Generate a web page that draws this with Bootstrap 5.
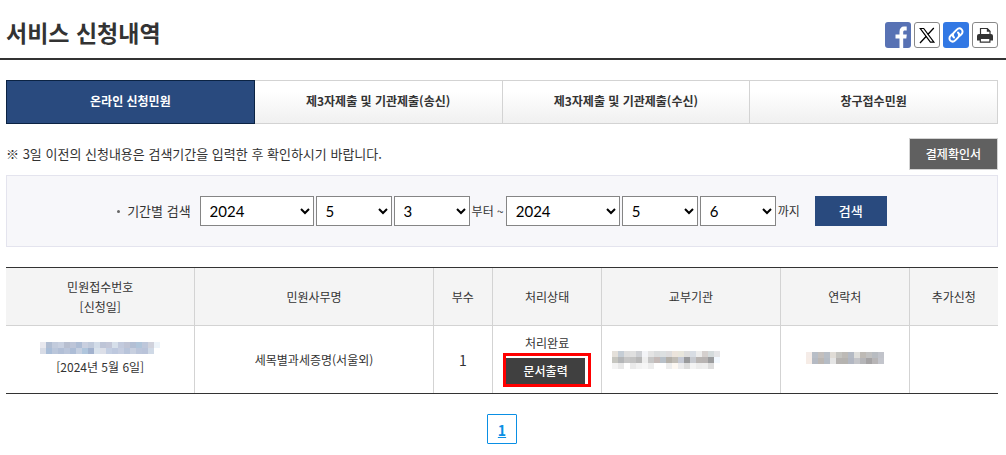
<!DOCTYPE html>
<html lang="ko">
<head>
<meta charset="utf-8">
<meta name="viewport" content="width=device-width, initial-scale=1">
<title>서비스 신청내역</title>
<link href="https://cdn.jsdelivr.net/npm/bootstrap@5.3.0/dist/css/bootstrap.min.css" rel="stylesheet">
<style>
body{font-family:"Noto Sans CJK KR",sans-serif;font-size:13px;line-height:20px;color:#333;background:#fff}
.page-head{border-bottom:2px solid #333;padding:17px 8px 11px 6px}
.page-head h1{font-size:23px;line-height:30px;font-weight:700}
.share{gap:3px;padding-top:5px;margin-bottom:-1px}
.share-btn{width:26px;height:26px;border:1px solid #888;border-radius:3px;background:#fff;padding:0;overflow:hidden;display:block}
.share-btn svg{display:block;width:100%;height:100%}
.share-fb{border:0;background:#5872b4}
.share-link{border:0;background:#3278e4}
.content{padding:20px 8px 0 6px}
.tab-row .nav-link{height:44px;border:1px solid #d3d3d3;border-left-width:0;border-radius:0;padding:9px 0;font-size:12px;line-height:22px;font-weight:700;color:#333;background:linear-gradient(#fff 25%,#f0f0f0)}
.tab-row .nav-link.active{background:#294a7e;border:1px solid #0b2343;color:#fff}
.receipt-btn{font-size:12px;line-height:20px;font-weight:500;color:#fff;background:#606060;border:1px solid #d3d3d3;border-radius:0;padding:5px 16px}
.notice{margin:14px 0 5px}
.search-box{background:#f7f7fa;border:1px solid #e4e4ee;padding:20px 0;gap:2px}
.search-box select{height:30px;border:1px solid #858585;border-radius:0;background:#fff;color:#000;font:15px Lato,sans-serif;padding:0 0 0 5px}
.sel-year{width:114px}
.sel-part{width:76px}
.unit{font-size:12px}
.dot{width:3px;height:3px;border-radius:50%;background:#666;margin-right:5px}
.search-box label{margin-right:7px}
.search-btn{width:72px;height:30px;padding:0;border:0;border-radius:0;background:#294a7e;color:#fff;font-size:13px;font-weight:500;margin-left:13px}
.result-table{table-layout:fixed;border-collapse:separate;border-spacing:0;margin:20px 0;color:#333;border-top:1px solid #333;border-bottom:1px solid #333;font-size:12px;line-height:20px;text-align:center}
.result-table>:not(caption)>*>*{border:0 solid #d3d3d3;border-left-width:1px;padding:8px 0;vertical-align:middle}
.result-table>:not(caption)>*>:first-child{border-left:0}
.result-table>thead>tr>th{background:#f4f4f4;font-weight:400;height:58px;border-bottom-width:1px}
.result-table tbody td{height:67px}
.mosaic{display:block;margin:0 auto 3px}
.result-table>tbody>tr>.agency{padding-left:10px}
.agency .mosaic{margin:0}
.copies{font-size:14px}
.print-mark{display:inline-block;border:3px solid #f00;padding:2px 3px 0 0;background:#fff;vertical-align:top}
.print-btn{display:block;width:79px;height:26px;padding:0;border:0;border-radius:0;background:#404040;color:#fff;font-size:12px;font-weight:500}
.page-now{width:30px;height:30px;border:1px solid #0a8fe4;border-radius:1px;padding:0;color:#0a8fe4;font-size:14px;line-height:30px;font-weight:700;text-decoration:underline;text-align:center}
</style>
</head>
<body>
<header class="page-head d-flex justify-content-between align-items-start">
  <h1 class="m-0">서비스 신청내역</h1>
  <div class="share d-flex">
    <button type="button" class="share-btn share-fb" aria-label="페이스북"><svg viewBox="0 0 26 26"><path fill="#fff" d="M14.500 26V16.500h-4v-4h4V10C14.500 6.500 16.300 4.600 19 4.600h2.700v3.900h-1.800c-1.300 0-1.700.600-1.700 1.800v2.200h3.600l-.5 4h-3.100V26z"/></svg></button>
    <button type="button" class="share-btn" aria-label="X"><svg viewBox="0 0 24 24"><path d="M5.300 5.500h3.400l10.200 13.600h-3.500z" fill="#fff" stroke="#000" stroke-width="1.200"/><path d="M18.800 5l-6 6.500M11.300 13.300L5 20" fill="none" stroke="#000" stroke-width="1.300"/></svg></button>
    <button type="button" class="share-btn share-link" aria-label="링크 복사"><svg viewBox="0 0 26 26" fill="none" stroke="#fff" stroke-width="2" stroke-linecap="round"><path d="M11 15.500c-1.600-1.600-1.500-3.500-.2-4.900l3-3c1.500-1.500 3.500-1.500 4.800-.2s1.300 3.400-.2 4.800l-1.700 1.700"/><path d="M15 10.500c1.600 1.600 1.500 3.500.2 4.900l-3 3c-1.500 1.500-3.500 1.500-4.800.2s-1.300-3.400.2-4.800l1.700-1.700"/></svg></button>
    <button type="button" class="share-btn" aria-label="인쇄"><svg viewBox="0 0 24 24"><path d="M7.500 11V5.500h6.800L17 8.200V11" fill="#fff" stroke="#333" stroke-width="1.200"/><path d="M13.800 5v3.700H17.500z" fill="#333"/><path d="M6 11h12q2 0 2 2v4.500H4V13q0-2 2-2z" fill="#333"/><path d="M7.300 15.500h9.600v3.600H7.300z" fill="#fff" stroke="#333" stroke-width="1.200"/></svg></button>
  </div>
</header>
<main class="content">
  <nav class="tab-row nav nav-justified">
    <a class="nav-link active" aria-current="page" href="#">온라인 신청민원</a>
    <a class="nav-link" href="#">제3자제출 및 기관제출(송신)</a>
    <a class="nav-link" href="#">제3자제출 및 기관제출(수신)</a>
    <a class="nav-link" href="#">창구접수민원</a>
  </nav>
  <div class="notice d-flex justify-content-between align-items-center">
    <span>※ 3일 이전의 신청내용은 검색기간을 입력한 후 확인하시기 바랍니다.</span>
    <button type="button" class="btn receipt-btn">결제확인서</button>
  </div>
  <form class="search-box d-flex justify-content-center align-items-center">
    <span class="dot"></span>
    <label for="y1">기간별 검색</label>
    <select id="y1" class="sel-year"><option>2024</option></select>
    <select class="sel-part" aria-label="시작 월"><option>5</option></select>
    <select class="sel-part" aria-label="시작 일"><option>3</option></select>
    <span class="unit">부터 ~</span>
    <select class="sel-year" aria-label="종료 연도"><option>2024</option></select>
    <select class="sel-part" aria-label="종료 월"><option>5</option></select>
    <select class="sel-part" aria-label="종료 일"><option>6</option></select>
    <span class="unit">까지</span>
    <button type="button" class="btn search-btn">검색</button>
  </form>
  <table class="table result-table">
    <colgroup><col style="width:19%"><col style="width:24%"><col style="width:6%"><col style="width:11%"><col style="width:18%"><col style="width:13%"><col style="width:9%"></colgroup>
    <thead><tr><th scope="col">민원접수번호<br>[신청일]</th><th scope="col">민원사무명</th><th scope="col">부수</th><th scope="col">처리상태</th><th scope="col">교부기관</th><th scope="col">연락처</th><th scope="col">추가신청</th></tr></thead>
    <tbody><tr>
      <td><svg class="mosaic" data-rows="e8e8ee b0bdd2 c2cbdc c8d0e0 b8bfd0 bdc5d8 aebdd5 c9cfdf c0cadb d2dce8 bec5d7 c3c7d8 d6dfea c2cadd bfc4d5 b3bfd4 b0c5da bec7da d0d2dc edf4fa|d8dce6 a9bdd7 bac6da b2bfd6 bac5da adbdd6 c5cfe0 afc5dc a2b2ce d9e2ec dcdfe8 c3cee2 bdc8de c5cde0 b8c4da c7cfdf bbc5da b9c3d9 cfd9e6"></svg>[2024년 5월 6일]</td>
      <td>세목별과세증명(서울외)</td>
      <td class="copies">1</td>
      <td class="p-0">처리완료<br><span class="print-mark"><button type="button" class="btn print-btn">문서출력</button></span></td>
      <td class="agency"><svg class="mosaic" data-rows="e4e0da c5cdd5 dddddd e0e0e0 ced0d4 f3f4f7 e4e4e4 dadcdd dce0e1 dddcdd ece4dc e8e6dc dddddd d8dde4 ededed d5d0ce d5dbdc e5e5e7|c6c6c0 b4b6b8 c6c6c6 c3c3c3 b8b8b8 eeeeee c7c7c7 c4bab8 b8c0c8 b4b0a9 c1bdb6 c5c9d4 999a9c c7cad0 b9b5b3 b8b4b3 9b9c9e f3f9ff|f3f3f3 e8e8e8 ffffff eaeaea f2f2f2 f6f6f6 ededed ffffff ffffff ededed fdf8f2 ececed dddddd f4f4f4 ececec eeeeee dddddd"></svg></td>
      <td><svg class="mosaic" data-rows="f5ece8 b8bec7 c3bfbd b8bec6 e0dcd6 c4c4c0 bdbab6 b4bac4 dededb bebab5 c1c1c1 b8bcc1 c1c3ca|f6ece6 b5bac3 bcb7b3 b5bcc5 e5e5e5 b6b3b1 b5b3b0 b2b7c2 c4c5c9 b5b5b8 a5a3a4 b7b5b6 c3c5cc"></svg></td>
      <td></td>
    </tr></tbody>
  </table>
  <nav class="d-flex justify-content-center" aria-label="페이지"><a class="page-now" href="#" aria-current="page">1</a></nav>
</main>
<script>
// Masked personal details: each colour is one 6px block.
document.querySelectorAll('.mosaic').forEach(svg => {
  const rows = svg.dataset.rows.split('|').map(r => r.split(' '));
  svg.setAttribute('width', Math.max(...rows.map(r => r.length)) * 6);
  svg.setAttribute('height', rows.length * 6);
  svg.setAttribute('shape-rendering', 'crispEdges');
  svg.innerHTML = rows.map((r, y) => r.map((c, x) => `<rect x="${x * 6}" y="${y * 6}" width="6" height="6" fill="#${c}"/>`).join('')).join('');
});
</script>
<script src="https://cdn.jsdelivr.net/npm/bootstrap@5.3.0/dist/js/bootstrap.bundle.min.js"></script>
</body>
</html>
